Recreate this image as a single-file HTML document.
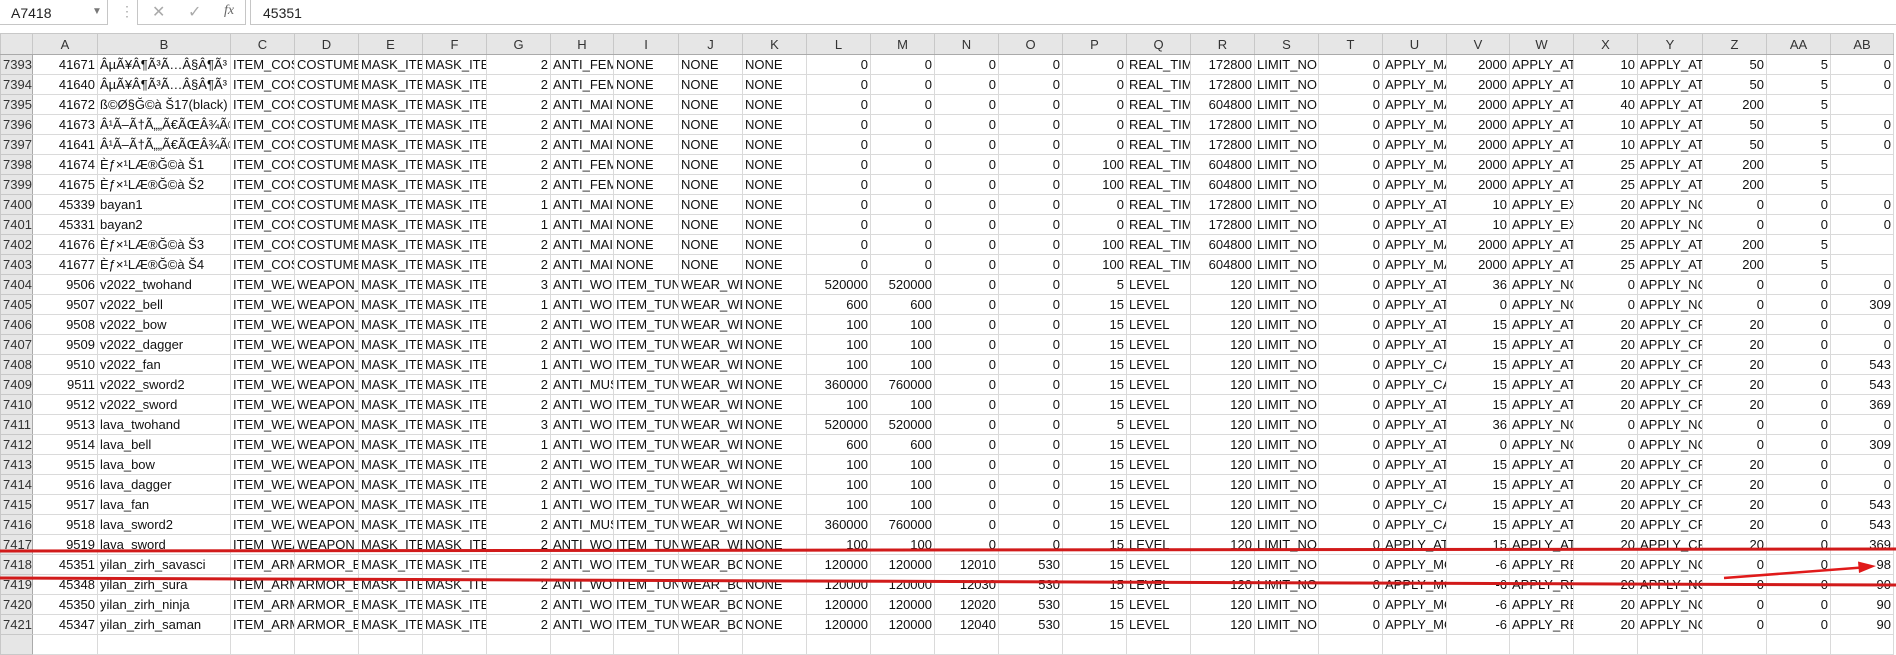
<!DOCTYPE html>
<html><head><meta charset="utf-8"><style>
html,body{margin:0;padding:0;width:1896px;height:640px;overflow:hidden;background:#fff;font-family:"Liberation Sans",Arial,sans-serif;}
#bar{position:absolute;left:0;top:0;width:1896px;height:33px;background:#fff;}
.nb{position:absolute;left:-1px;top:-1px;width:107px;height:24px;border:1px solid #c6c6c6;background:#fff;}
.nb span{position:absolute;left:11px;top:5px;font-size:14px;color:#222;}
.nb i{position:absolute;left:92px;top:6px;font-style:normal;font-size:10px;color:#777;}
.dots{position:absolute;left:120px;top:3px;color:#aaa;font-size:14px;}
.fb1{position:absolute;left:137px;top:-1px;width:107px;height:24px;border:1px solid #c6c6c6;background:#fff;color:#aaa;font-size:16px;}
.fb2{position:absolute;left:250px;top:-1px;width:1660px;height:24px;border:1px solid #c6c6c6;background:#fff;}
.fb2 span{position:absolute;left:12px;top:5px;font-size:14px;color:#222;}
table{position:absolute;left:0;top:33px;border-collapse:collapse;table-layout:fixed;width:1894px;}
td,th{height:19px;padding:0 2px;border:1px solid #dadada;font-size:13px;white-space:nowrap;overflow:hidden;font-weight:normal;color:#111;line-height:19px;text-overflow:clip;}
thead th{background:#e6e6e6;color:#333;text-align:center;height:20px;border-color:#c8c8c8;border-bottom:1px solid #aaa;}
tbody th{background:#e6e6e6;color:#333;text-align:left;padding-left:2px;border-color:#c8c8c8;border-right:1px solid #aaa;}
td.n{text-align:right;}
</style></head><body>
<div id="bar">
<div class="nb"><span>A7418</span><i>▼</i></div>
<div class="dots">⋮</div>
<div class="fb1"><span style="position:absolute;left:14px;top:2px">✕</span><span style="position:absolute;left:50px;top:2px">✓</span><span style="position:absolute;left:86px;top:3px;font-family:'Liberation Serif',serif;font-style:italic;color:#666;font-size:14px">fx</span></div>
<div class="fb2"><span>45351</span></div>
</div>
<table>
<colgroup><col style="width:32px"><col style="width:65px"><col style="width:133px">
<col style="width:64px"><col style="width:64px"><col style="width:64px"><col style="width:64px"><col style="width:64px"><col style="width:63px"><col style="width:65px"><col style="width:64px"><col style="width:64px"><col style="width:64px"><col style="width:64px"><col style="width:64px"><col style="width:64px"><col style="width:64px"><col style="width:64px"><col style="width:64px"><col style="width:64px"><col style="width:64px"><col style="width:64px"><col style="width:63px"><col style="width:64px"><col style="width:64px"><col style="width:65px"><col style="width:64px"><col style="width:64px"><col style="width:63px"></colgroup>
<thead><tr><th style="background:#e6e6e6"></th><th>A</th><th>B</th><th>C</th><th>D</th><th>E</th><th>F</th><th>G</th><th>H</th><th>I</th><th>J</th><th>K</th><th>L</th><th>M</th><th>N</th><th>O</th><th>P</th><th>Q</th><th>R</th><th>S</th><th>T</th><th>U</th><th>V</th><th>W</th><th>X</th><th>Y</th><th>Z</th><th>AA</th><th>AB</th></tr></thead>
<tbody>
<tr><th>7393</th><td class=n>41671</td><td>ÂµÃ¥Â¶Ã³Ã…Â§Â¶Ã³</td><td>ITEM_COS</td><td>COSTUME_</td><td>MASK_ITE</td><td>MASK_ITE</td><td class=n>2</td><td>ANTI_FEM</td><td>NONE</td><td>NONE</td><td>NONE</td><td class=n>0</td><td class=n>0</td><td class=n>0</td><td class=n>0</td><td class=n>0</td><td>REAL_TIM</td><td class=n>172800</td><td>LIMIT_NO</td><td class=n>0</td><td>APPLY_MA</td><td class=n>2000</td><td>APPLY_AT</td><td class=n>10</td><td>APPLY_AT</td><td class=n>50</td><td class=n>5</td><td class=n>0</td></tr>
<tr><th>7394</th><td class=n>41640</td><td>ÂµÃ¥Â¶Ã³Ã…Â§Â¶Ã³</td><td>ITEM_COS</td><td>COSTUME_</td><td>MASK_ITE</td><td>MASK_ITE</td><td class=n>2</td><td>ANTI_FEM</td><td>NONE</td><td>NONE</td><td>NONE</td><td class=n>0</td><td class=n>0</td><td class=n>0</td><td class=n>0</td><td class=n>0</td><td>REAL_TIM</td><td class=n>172800</td><td>LIMIT_NO</td><td class=n>0</td><td>APPLY_MA</td><td class=n>2000</td><td>APPLY_AT</td><td class=n>10</td><td>APPLY_AT</td><td class=n>50</td><td class=n>5</td><td class=n>0</td></tr>
<tr><th>7395</th><td class=n>41672</td><td>ß©Ø§Ğ©à Š17(black)</td><td>ITEM_COS</td><td>COSTUME_</td><td>MASK_ITE</td><td>MASK_ITE</td><td class=n>2</td><td>ANTI_MAI</td><td>NONE</td><td>NONE</td><td>NONE</td><td class=n>0</td><td class=n>0</td><td class=n>0</td><td class=n>0</td><td class=n>0</td><td>REAL_TIM</td><td class=n>604800</td><td>LIMIT_NO</td><td class=n>0</td><td>APPLY_MA</td><td class=n>2000</td><td>APPLY_AT</td><td class=n>40</td><td>APPLY_AT</td><td class=n>200</td><td class=n>5</td><td></td></tr>
<tr><th>7396</th><td class=n>41673</td><td>Â¹Ã–Ã†Ã„„Ã€ÃŒÂ¾Ã©</td><td>ITEM_COS</td><td>COSTUME_</td><td>MASK_ITE</td><td>MASK_ITE</td><td class=n>2</td><td>ANTI_MAI</td><td>NONE</td><td>NONE</td><td>NONE</td><td class=n>0</td><td class=n>0</td><td class=n>0</td><td class=n>0</td><td class=n>0</td><td>REAL_TIM</td><td class=n>172800</td><td>LIMIT_NO</td><td class=n>0</td><td>APPLY_MA</td><td class=n>2000</td><td>APPLY_AT</td><td class=n>10</td><td>APPLY_AT</td><td class=n>50</td><td class=n>5</td><td class=n>0</td></tr>
<tr><th>7397</th><td class=n>41641</td><td>Â¹Ã–Ã†Ã„„Ã€ÃŒÂ¾Ã©</td><td>ITEM_COS</td><td>COSTUME_</td><td>MASK_ITE</td><td>MASK_ITE</td><td class=n>2</td><td>ANTI_MAI</td><td>NONE</td><td>NONE</td><td>NONE</td><td class=n>0</td><td class=n>0</td><td class=n>0</td><td class=n>0</td><td class=n>0</td><td>REAL_TIM</td><td class=n>172800</td><td>LIMIT_NO</td><td class=n>0</td><td>APPLY_MA</td><td class=n>2000</td><td>APPLY_AT</td><td class=n>10</td><td>APPLY_AT</td><td class=n>50</td><td class=n>5</td><td class=n>0</td></tr>
<tr><th>7398</th><td class=n>41674</td><td>Èƒ×¹LÆ®Ğ©à Š1</td><td>ITEM_COS</td><td>COSTUME_</td><td>MASK_ITE</td><td>MASK_ITE</td><td class=n>2</td><td>ANTI_FEM</td><td>NONE</td><td>NONE</td><td>NONE</td><td class=n>0</td><td class=n>0</td><td class=n>0</td><td class=n>0</td><td class=n>100</td><td>REAL_TIM</td><td class=n>604800</td><td>LIMIT_NO</td><td class=n>0</td><td>APPLY_MA</td><td class=n>2000</td><td>APPLY_AT</td><td class=n>25</td><td>APPLY_AT</td><td class=n>200</td><td class=n>5</td><td></td></tr>
<tr><th>7399</th><td class=n>41675</td><td>Èƒ×¹LÆ®Ğ©à Š2</td><td>ITEM_COS</td><td>COSTUME_</td><td>MASK_ITE</td><td>MASK_ITE</td><td class=n>2</td><td>ANTI_FEM</td><td>NONE</td><td>NONE</td><td>NONE</td><td class=n>0</td><td class=n>0</td><td class=n>0</td><td class=n>0</td><td class=n>100</td><td>REAL_TIM</td><td class=n>604800</td><td>LIMIT_NO</td><td class=n>0</td><td>APPLY_MA</td><td class=n>2000</td><td>APPLY_AT</td><td class=n>25</td><td>APPLY_AT</td><td class=n>200</td><td class=n>5</td><td></td></tr>
<tr><th>7400</th><td class=n>45339</td><td>bayan1</td><td>ITEM_COS</td><td>COSTUME_</td><td>MASK_ITE</td><td>MASK_ITE</td><td class=n>1</td><td>ANTI_MAI</td><td>NONE</td><td>NONE</td><td>NONE</td><td class=n>0</td><td class=n>0</td><td class=n>0</td><td class=n>0</td><td class=n>0</td><td>REAL_TIM</td><td class=n>172800</td><td>LIMIT_NO</td><td class=n>0</td><td>APPLY_AT</td><td class=n>10</td><td>APPLY_EX</td><td class=n>20</td><td>APPLY_NO</td><td class=n>0</td><td class=n>0</td><td class=n>0</td></tr>
<tr><th>7401</th><td class=n>45331</td><td>bayan2</td><td>ITEM_COS</td><td>COSTUME_</td><td>MASK_ITE</td><td>MASK_ITE</td><td class=n>1</td><td>ANTI_MAI</td><td>NONE</td><td>NONE</td><td>NONE</td><td class=n>0</td><td class=n>0</td><td class=n>0</td><td class=n>0</td><td class=n>0</td><td>REAL_TIM</td><td class=n>172800</td><td>LIMIT_NO</td><td class=n>0</td><td>APPLY_AT</td><td class=n>10</td><td>APPLY_EX</td><td class=n>20</td><td>APPLY_NO</td><td class=n>0</td><td class=n>0</td><td class=n>0</td></tr>
<tr><th>7402</th><td class=n>41676</td><td>Èƒ×¹LÆ®Ğ©à Š3</td><td>ITEM_COS</td><td>COSTUME_</td><td>MASK_ITE</td><td>MASK_ITE</td><td class=n>2</td><td>ANTI_MAI</td><td>NONE</td><td>NONE</td><td>NONE</td><td class=n>0</td><td class=n>0</td><td class=n>0</td><td class=n>0</td><td class=n>100</td><td>REAL_TIM</td><td class=n>604800</td><td>LIMIT_NO</td><td class=n>0</td><td>APPLY_MA</td><td class=n>2000</td><td>APPLY_AT</td><td class=n>25</td><td>APPLY_AT</td><td class=n>200</td><td class=n>5</td><td></td></tr>
<tr><th>7403</th><td class=n>41677</td><td>Èƒ×¹LÆ®Ğ©à Š4</td><td>ITEM_COS</td><td>COSTUME_</td><td>MASK_ITE</td><td>MASK_ITE</td><td class=n>2</td><td>ANTI_MAI</td><td>NONE</td><td>NONE</td><td>NONE</td><td class=n>0</td><td class=n>0</td><td class=n>0</td><td class=n>0</td><td class=n>100</td><td>REAL_TIM</td><td class=n>604800</td><td>LIMIT_NO</td><td class=n>0</td><td>APPLY_MA</td><td class=n>2000</td><td>APPLY_AT</td><td class=n>25</td><td>APPLY_AT</td><td class=n>200</td><td class=n>5</td><td></td></tr>
<tr><th>7404</th><td class=n>9506</td><td>v2022_twohand</td><td>ITEM_WEA</td><td>WEAPON_</td><td>MASK_ITE</td><td>MASK_ITE</td><td class=n>3</td><td>ANTI_WO</td><td>ITEM_TUN</td><td>WEAR_WE</td><td>NONE</td><td class=n>520000</td><td class=n>520000</td><td class=n>0</td><td class=n>0</td><td class=n>5</td><td>LEVEL</td><td class=n>120</td><td>LIMIT_NO</td><td class=n>0</td><td>APPLY_AT</td><td class=n>36</td><td>APPLY_NO</td><td class=n>0</td><td>APPLY_NO</td><td class=n>0</td><td class=n>0</td><td class=n>0</td></tr>
<tr><th>7405</th><td class=n>9507</td><td>v2022_bell</td><td>ITEM_WEA</td><td>WEAPON_</td><td>MASK_ITE</td><td>MASK_ITE</td><td class=n>1</td><td>ANTI_WO</td><td>ITEM_TUN</td><td>WEAR_WE</td><td>NONE</td><td class=n>600</td><td class=n>600</td><td class=n>0</td><td class=n>0</td><td class=n>15</td><td>LEVEL</td><td class=n>120</td><td>LIMIT_NO</td><td class=n>0</td><td>APPLY_AT</td><td class=n>0</td><td>APPLY_NO</td><td class=n>0</td><td>APPLY_NO</td><td class=n>0</td><td class=n>0</td><td class=n>309</td></tr>
<tr><th>7406</th><td class=n>9508</td><td>v2022_bow</td><td>ITEM_WEA</td><td>WEAPON_</td><td>MASK_ITE</td><td>MASK_ITE</td><td class=n>2</td><td>ANTI_WO</td><td>ITEM_TUN</td><td>WEAR_WE</td><td>NONE</td><td class=n>100</td><td class=n>100</td><td class=n>0</td><td class=n>0</td><td class=n>15</td><td>LEVEL</td><td class=n>120</td><td>LIMIT_NO</td><td class=n>0</td><td>APPLY_AT</td><td class=n>15</td><td>APPLY_AT</td><td class=n>20</td><td>APPLY_CR</td><td class=n>20</td><td class=n>0</td><td class=n>0</td></tr>
<tr><th>7407</th><td class=n>9509</td><td>v2022_dagger</td><td>ITEM_WEA</td><td>WEAPON_</td><td>MASK_ITE</td><td>MASK_ITE</td><td class=n>2</td><td>ANTI_WO</td><td>ITEM_TUN</td><td>WEAR_WE</td><td>NONE</td><td class=n>100</td><td class=n>100</td><td class=n>0</td><td class=n>0</td><td class=n>15</td><td>LEVEL</td><td class=n>120</td><td>LIMIT_NO</td><td class=n>0</td><td>APPLY_AT</td><td class=n>15</td><td>APPLY_AT</td><td class=n>20</td><td>APPLY_CR</td><td class=n>20</td><td class=n>0</td><td class=n>0</td></tr>
<tr><th>7408</th><td class=n>9510</td><td>v2022_fan</td><td>ITEM_WEA</td><td>WEAPON_</td><td>MASK_ITE</td><td>MASK_ITE</td><td class=n>1</td><td>ANTI_WO</td><td>ITEM_TUN</td><td>WEAR_WE</td><td>NONE</td><td class=n>100</td><td class=n>100</td><td class=n>0</td><td class=n>0</td><td class=n>15</td><td>LEVEL</td><td class=n>120</td><td>LIMIT_NO</td><td class=n>0</td><td>APPLY_CA</td><td class=n>15</td><td>APPLY_AT</td><td class=n>20</td><td>APPLY_CR</td><td class=n>20</td><td class=n>0</td><td class=n>543</td></tr>
<tr><th>7409</th><td class=n>9511</td><td>v2022_sword2</td><td>ITEM_WEA</td><td>WEAPON_</td><td>MASK_ITE</td><td>MASK_ITE</td><td class=n>2</td><td>ANTI_MUS</td><td>ITEM_TUN</td><td>WEAR_WE</td><td>NONE</td><td class=n>360000</td><td class=n>760000</td><td class=n>0</td><td class=n>0</td><td class=n>15</td><td>LEVEL</td><td class=n>120</td><td>LIMIT_NO</td><td class=n>0</td><td>APPLY_CA</td><td class=n>15</td><td>APPLY_AT</td><td class=n>20</td><td>APPLY_CR</td><td class=n>20</td><td class=n>0</td><td class=n>543</td></tr>
<tr><th>7410</th><td class=n>9512</td><td>v2022_sword</td><td>ITEM_WEA</td><td>WEAPON_</td><td>MASK_ITE</td><td>MASK_ITE</td><td class=n>2</td><td>ANTI_WO</td><td>ITEM_TUN</td><td>WEAR_WE</td><td>NONE</td><td class=n>100</td><td class=n>100</td><td class=n>0</td><td class=n>0</td><td class=n>15</td><td>LEVEL</td><td class=n>120</td><td>LIMIT_NO</td><td class=n>0</td><td>APPLY_AT</td><td class=n>15</td><td>APPLY_AT</td><td class=n>20</td><td>APPLY_CR</td><td class=n>20</td><td class=n>0</td><td class=n>369</td></tr>
<tr><th>7411</th><td class=n>9513</td><td>lava_twohand</td><td>ITEM_WEA</td><td>WEAPON_</td><td>MASK_ITE</td><td>MASK_ITE</td><td class=n>3</td><td>ANTI_WO</td><td>ITEM_TUN</td><td>WEAR_WE</td><td>NONE</td><td class=n>520000</td><td class=n>520000</td><td class=n>0</td><td class=n>0</td><td class=n>5</td><td>LEVEL</td><td class=n>120</td><td>LIMIT_NO</td><td class=n>0</td><td>APPLY_AT</td><td class=n>36</td><td>APPLY_NO</td><td class=n>0</td><td>APPLY_NO</td><td class=n>0</td><td class=n>0</td><td class=n>0</td></tr>
<tr><th>7412</th><td class=n>9514</td><td>lava_bell</td><td>ITEM_WEA</td><td>WEAPON_</td><td>MASK_ITE</td><td>MASK_ITE</td><td class=n>1</td><td>ANTI_WO</td><td>ITEM_TUN</td><td>WEAR_WE</td><td>NONE</td><td class=n>600</td><td class=n>600</td><td class=n>0</td><td class=n>0</td><td class=n>15</td><td>LEVEL</td><td class=n>120</td><td>LIMIT_NO</td><td class=n>0</td><td>APPLY_AT</td><td class=n>0</td><td>APPLY_NO</td><td class=n>0</td><td>APPLY_NO</td><td class=n>0</td><td class=n>0</td><td class=n>309</td></tr>
<tr><th>7413</th><td class=n>9515</td><td>lava_bow</td><td>ITEM_WEA</td><td>WEAPON_</td><td>MASK_ITE</td><td>MASK_ITE</td><td class=n>2</td><td>ANTI_WO</td><td>ITEM_TUN</td><td>WEAR_WE</td><td>NONE</td><td class=n>100</td><td class=n>100</td><td class=n>0</td><td class=n>0</td><td class=n>15</td><td>LEVEL</td><td class=n>120</td><td>LIMIT_NO</td><td class=n>0</td><td>APPLY_AT</td><td class=n>15</td><td>APPLY_AT</td><td class=n>20</td><td>APPLY_CR</td><td class=n>20</td><td class=n>0</td><td class=n>0</td></tr>
<tr><th>7414</th><td class=n>9516</td><td>lava_dagger</td><td>ITEM_WEA</td><td>WEAPON_</td><td>MASK_ITE</td><td>MASK_ITE</td><td class=n>2</td><td>ANTI_WO</td><td>ITEM_TUN</td><td>WEAR_WE</td><td>NONE</td><td class=n>100</td><td class=n>100</td><td class=n>0</td><td class=n>0</td><td class=n>15</td><td>LEVEL</td><td class=n>120</td><td>LIMIT_NO</td><td class=n>0</td><td>APPLY_AT</td><td class=n>15</td><td>APPLY_AT</td><td class=n>20</td><td>APPLY_CR</td><td class=n>20</td><td class=n>0</td><td class=n>0</td></tr>
<tr><th>7415</th><td class=n>9517</td><td>lava_fan</td><td>ITEM_WEA</td><td>WEAPON_</td><td>MASK_ITE</td><td>MASK_ITE</td><td class=n>1</td><td>ANTI_WO</td><td>ITEM_TUN</td><td>WEAR_WE</td><td>NONE</td><td class=n>100</td><td class=n>100</td><td class=n>0</td><td class=n>0</td><td class=n>15</td><td>LEVEL</td><td class=n>120</td><td>LIMIT_NO</td><td class=n>0</td><td>APPLY_CA</td><td class=n>15</td><td>APPLY_AT</td><td class=n>20</td><td>APPLY_CR</td><td class=n>20</td><td class=n>0</td><td class=n>543</td></tr>
<tr><th>7416</th><td class=n>9518</td><td>lava_sword2</td><td>ITEM_WEA</td><td>WEAPON_</td><td>MASK_ITE</td><td>MASK_ITE</td><td class=n>2</td><td>ANTI_MUS</td><td>ITEM_TUN</td><td>WEAR_WE</td><td>NONE</td><td class=n>360000</td><td class=n>760000</td><td class=n>0</td><td class=n>0</td><td class=n>15</td><td>LEVEL</td><td class=n>120</td><td>LIMIT_NO</td><td class=n>0</td><td>APPLY_CA</td><td class=n>15</td><td>APPLY_AT</td><td class=n>20</td><td>APPLY_CR</td><td class=n>20</td><td class=n>0</td><td class=n>543</td></tr>
<tr><th>7417</th><td class=n>9519</td><td>lava_sword</td><td>ITEM_WEA</td><td>WEAPON_</td><td>MASK_ITE</td><td>MASK_ITE</td><td class=n>2</td><td>ANTI_WO</td><td>ITEM_TUN</td><td>WEAR_WE</td><td>NONE</td><td class=n>100</td><td class=n>100</td><td class=n>0</td><td class=n>0</td><td class=n>15</td><td>LEVEL</td><td class=n>120</td><td>LIMIT_NO</td><td class=n>0</td><td>APPLY_AT</td><td class=n>15</td><td>APPLY_AT</td><td class=n>20</td><td>APPLY_CR</td><td class=n>20</td><td class=n>0</td><td class=n>369</td></tr>
<tr><th>7418</th><td class=n>45351</td><td>yilan_zirh_savasci</td><td>ITEM_ARM</td><td>ARMOR_B</td><td>MASK_ITE</td><td>MASK_ITE</td><td class=n>2</td><td>ANTI_WO</td><td>ITEM_TUN</td><td>WEAR_BO</td><td>NONE</td><td class=n>120000</td><td class=n>120000</td><td class=n>12010</td><td class=n>530</td><td class=n>15</td><td>LEVEL</td><td class=n>120</td><td>LIMIT_NO</td><td class=n>0</td><td>APPLY_MO</td><td class=n>-6</td><td>APPLY_RE</td><td class=n>20</td><td>APPLY_NO</td><td class=n>0</td><td class=n>0</td><td class=n>98</td></tr>
<tr><th>7419</th><td class=n>45348</td><td>yilan_zirh_sura</td><td>ITEM_ARM</td><td>ARMOR_B</td><td>MASK_ITE</td><td>MASK_ITE</td><td class=n>2</td><td>ANTI_WO</td><td>ITEM_TUN</td><td>WEAR_BO</td><td>NONE</td><td class=n>120000</td><td class=n>120000</td><td class=n>12030</td><td class=n>530</td><td class=n>15</td><td>LEVEL</td><td class=n>120</td><td>LIMIT_NO</td><td class=n>0</td><td>APPLY_MO</td><td class=n>-6</td><td>APPLY_RE</td><td class=n>20</td><td>APPLY_NO</td><td class=n>0</td><td class=n>0</td><td class=n>90</td></tr>
<tr><th>7420</th><td class=n>45350</td><td>yilan_zirh_ninja</td><td>ITEM_ARM</td><td>ARMOR_B</td><td>MASK_ITE</td><td>MASK_ITE</td><td class=n>2</td><td>ANTI_WO</td><td>ITEM_TUN</td><td>WEAR_BO</td><td>NONE</td><td class=n>120000</td><td class=n>120000</td><td class=n>12020</td><td class=n>530</td><td class=n>15</td><td>LEVEL</td><td class=n>120</td><td>LIMIT_NO</td><td class=n>0</td><td>APPLY_MO</td><td class=n>-6</td><td>APPLY_RE</td><td class=n>20</td><td>APPLY_NO</td><td class=n>0</td><td class=n>0</td><td class=n>90</td></tr>
<tr><th>7421</th><td class=n>45347</td><td>yilan_zirh_saman</td><td>ITEM_ARM</td><td>ARMOR_B</td><td>MASK_ITE</td><td>MASK_ITE</td><td class=n>2</td><td>ANTI_WO</td><td>ITEM_TUN</td><td>WEAR_BO</td><td>NONE</td><td class=n>120000</td><td class=n>120000</td><td class=n>12040</td><td class=n>530</td><td class=n>15</td><td>LEVEL</td><td class=n>120</td><td>LIMIT_NO</td><td class=n>0</td><td>APPLY_MO</td><td class=n>-6</td><td>APPLY_RE</td><td class=n>20</td><td>APPLY_NO</td><td class=n>0</td><td class=n>0</td><td class=n>90</td></tr>
<tr><th></th><td></td><td></td><td></td><td></td><td></td><td></td><td></td><td></td><td></td><td></td><td></td><td></td><td></td><td></td><td></td><td></td><td></td><td></td><td></td><td></td><td></td><td></td><td></td><td></td><td></td><td></td><td></td><td></td></tr>
</tbody></table>
<svg style="position:absolute;left:0;top:0" width="1896" height="640">
<line x1="0" y1="551" x2="1896" y2="549" stroke="#d11a1a" stroke-width="3"/>
<line x1="0" y1="578" x2="1896" y2="585" stroke="#d11a1a" stroke-width="3"/>
<line x1="1724" y1="578" x2="1862" y2="567.5" stroke="#e01a1a" stroke-width="2.5"/>
<polygon points="1876,566 1858,561.5 1859,573" fill="#e01a1a"/>
</svg>
</body></html>
